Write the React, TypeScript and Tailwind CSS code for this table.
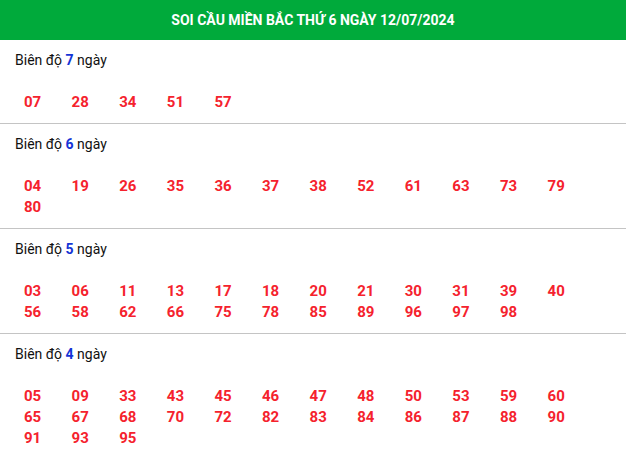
const sections: { days: number; nums: string[] }[] = [
  { days: 7, nums: ["07", "28", "34", "51", "57"] },
  { days: 6, nums: ["04", "19", "26", "35", "36", "37", "38", "52", "61", "63", "73", "79", "80"] },
  {
    days: 5,
    nums: ["03", "06", "11", "13", "17", "18", "20", "21", "30", "31", "39", "40", "56", "58", "62", "66", "75", "78", "85", "89", "96", "97", "98"],
  },
  {
    days: 4,
    nums: [
      "05", "09", "33", "43", "45", "46", "47", "48", "50", "53", "59", "60",
      "65", "67", "68", "70", "72", "82", "83", "84", "86", "87", "88", "90",
      "91", "93", "95",
    ],
  },
];

const App = () => {
  return (
    <div className="w-[626px] bg-white font-['Roboto',sans-serif]">
      <div className="h-10 bg-[#00aa3b] flex items-center justify-center">
        <h1 className="text-white text-[14px] font-bold">SOI CẦU MIỀN BẮC THỨ 6 NGÀY 12/07/2024</h1>
      </div>

      {sections.map((s, i) => (
        <section key={s.days} className={`pt-[10px] pb-[10px] ${i < sections.length - 1 ? "border-b border-[#c4c4c4]" : ""}`}>
          <div className="px-[15px] text-[14px] leading-5 text-[#111]">
            Biên độ <span className="font-bold text-[#1434d6]">{s.days}</span> ngày
          </div>

          <div className="mt-[22px] pl-[24px] grid grid-cols-[repeat(12,47.6px)]">
            {s.nums.map((n) => (
              <span key={n} className="text-[15px] leading-[21px] font-bold text-[#f5222d]">
                {n}
              </span>
            ))}
          </div>
        </section>
      ))}
    </div>
  );
};

export default App;
